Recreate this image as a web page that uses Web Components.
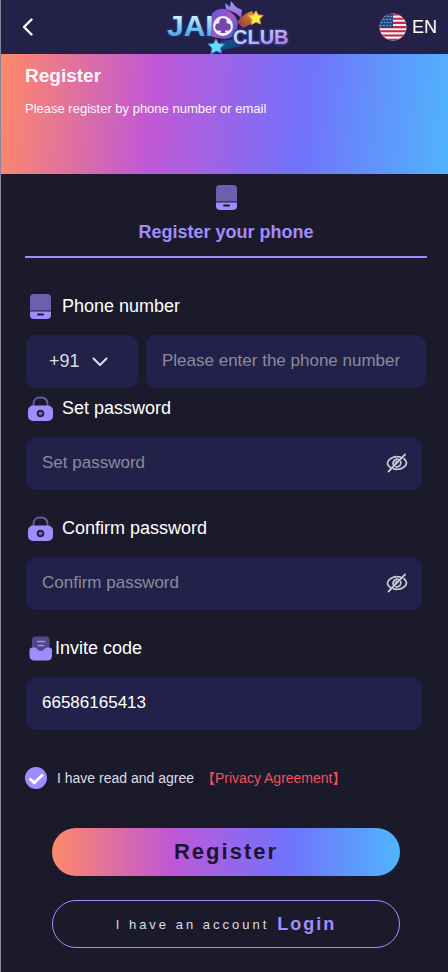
<!DOCTYPE html>
<html lang="en">
<head>
<meta charset="utf-8">
<meta name="viewport" content="width=device-width, initial-scale=1">
<title>Register</title>
<style>
  :root {
    --bg: #1b1a2b;
    --bar: #232148;
    --field: #222149;
    --accent: #a18cff;
    --rainbow: #ff8968 0%, #c058d6 34%, #7272fb 67%, #50b4fd 100%;
  }
  body {
    margin: 0;
    background: var(--bg);
    color: #fff;
    font-family: "Liberation Sans", Arial, sans-serif;
  }
</style>
</head>
<body>
<register-page></register-page>

<script>
const ICONS = {
  back: [12, 20, '<path d="M10.500 2.500 3 10l7.500 7.500" fill="none" stroke="#fff" stroke-width="2.400" stroke-linecap="round" stroke-linejoin="round"/>'],
  phone: [26, 28, '<path d="M3 17.500V5q0-4 4-4h13q4 0 4 4v12.500z" fill="#6e5fae"/><path d="M3 18.500h21V22q0 4-4 4H7q-4 0-4-4z" fill="#a18cff"/><rect x="10" y="20.500" width="7" height="2" rx="1" fill="#1b1a2b"/>'],
  lock: [26, 28, '<path d="M6.500 12V9q0-6.500 7-6.500t7 6.500v3" fill="none" stroke="#6a5ca6" stroke-width="1.800"/><rect x="1" y="10.500" width="25" height="15.500" rx="5" fill="#a18cff"/><circle cx="13.500" cy="18.500" r="3.800" fill="#29233f"/><circle cx="13.500" cy="18.500" r="1.800" fill="#7d6dc0"/>'],
  invite: [26, 28, '<path d="M5 16V5q0-3.500 3.500-3.500h10.500q3.500 0 3.500 3.500v11z" fill="#52478a"/><path d="M10.500 6.500h7M11.500 10.500h5" stroke="#a18cff" stroke-width="1.500" stroke-linecap="round"/><path d="M2.500 15q0-2.500 3-2.500h2q1.500 0 2.500 1.500 1.500 2 3.800 2t3.700-2q1-1.500 2.500-1.500h2q3 0 3 2.500v5.500q0 5-5 5H7.500q-5 0-5-5z" fill="#a18cff"/>'],
  down: [16, 10, '<path d="M1.500 1.500 8 8l6.500-6.500" fill="none" stroke="#dcdce6" stroke-width="2" stroke-linecap="round" stroke-linejoin="round"/>'],
  eye: [22, 20, '<g fill="none" stroke="#c6c6d2" stroke-width="1.800" stroke-linecap="round"><path d="M14.500 4.200A12 12 0 0 0 11 3.700C6 3.700 1.500 7 1.500 10c0 2 1.500 3.800 3.900 5M18 5.800c1.600 1.200 2.500 2.700 2.500 4.200 0 3-4.500 6.300-9.500 6.300-1.200 0-2.300-.2-3.300-.5"/><path d="M13 6.800A4 4 0 0 0 7.500 12M14.800 9A4 4 0 0 1 10 13.800M11.500 8.800a1.500 1.500 0 0 0-1.800 1.800"/><path d="M19 1.500 2.500 18.500"/></g>'],
  tick: [22, 22, '<path d="m4.500 11.500 4.700 4.300L18 7.500" fill="none" stroke="#fff" stroke-width="2.800"/>'],
  flag: [28, 28, '<defs><clipPath id="c"><circle cx="14" cy="14" r="13.500"/></clipPath></defs><g clip-path="url(#c)"><path fill="#f4eef2" d="M0 0h28v28H0z"/><path stroke="#c12b48" stroke-width="2.100" d="M0 1.500h28M0 5.700h28M0 9.900h28M0 14.100h28M0 18.300h28M0 22.500h28M0 26.700h28"/><path fill="#264a80" d="M0 0h14v15H0z"/><path stroke="#a9c0dd" stroke-width="1.200" stroke-dasharray="1.200 2" d="M2 3.500h12M1 6.500h13M2 9.500h12M1 12.500h13"/></g>']
};

class UiIcon extends HTMLElement {
  connectedCallback() {
    const [w, h, art] = ICONS[this.getAttribute('name')];
    this.attachShadow({ mode: 'open' }).innerHTML = `
      <style>:host{display:inline-flex;flex:none}svg{display:block;overflow:visible}</style>
      <svg width="${w}" height="${h}" viewBox="0 0 ${w} ${h}" aria-hidden="true">${art}</svg>`;
  }
}

class ClubLogo extends HTMLElement {
  constructor() {
    super();
    this.attachShadow({ mode: 'open' }).innerHTML = `
      <style>
        :host { display: block; }
        svg { display: block; overflow: visible; }
        text { font-family: "Liberation Sans", Arial, sans-serif; font-weight: bold; paint-order: stroke; stroke-linejoin: round; }
      </style>
      <svg width="124" height="54" viewBox="0 0 124 54" role="img" aria-label="JAI CLUB">
        <defs>
          <linearGradient id="a" x1="0" y1="0" x2="0" y2="1"><stop offset=".1" stop-color="#f2fbff"/><stop offset=".5" stop-color="#86d2f4"/><stop offset="1" stop-color="#3784dc"/></linearGradient>
          <linearGradient id="b" x1="0" y1="0" x2="1" y2="1"><stop stop-color="#b9f3ff"/><stop offset=".45" stop-color="#c4c4fa"/><stop offset="1" stop-color="#b264dc"/></linearGradient>
          <linearGradient id="r" x1="0" y1="0" x2="1" y2="1"><stop stop-color="#6a55cf"/><stop offset=".5" stop-color="#a657cf"/><stop offset="1" stop-color="#3e5fc8"/></linearGradient>
          <linearGradient id="o" x1="0" y1="1" x2="1" y2="0"><stop stop-color="#7b3049"/><stop offset="1" stop-color="#ff9b2c"/></linearGradient>
          <linearGradient id="k" x1="0" y1="0" x2="0" y2="1"><stop stop-color="#8fa4f0"/><stop offset="1" stop-color="#b25bd8"/></linearGradient>
        </defs>
        <path d="m59 9-1-6 5 4 1-6 5 6 6 3-1 8-4-4-6-3z" fill="url(#k)"/>
        <path d="M70 22q6-8 15-11l5 10-14 7z" fill="url(#o)"/>
        <path d="m54 41 14-2 8 7-22 4z" fill="#164a86"/>
        <text x="0" y="36" font-size="30" fill="url(#a)" stroke="#1b2d62" stroke-width="3">JAI</text>
        <path d="M45 13q10-8 19-1 9 7 6 17-2 9-12 10l-13-2z" fill="url(#r)"/>
        <circle cx="56" cy="26" r="10" fill="#f1f2ff"/>
        <g fill="#7448ac"><circle cx="56" cy="22" r="3.800"/><circle cx="52" cy="27" r="3.800"/><circle cx="60" cy="27" r="3.800"/><path d="M55 25h2l1.500 8h-5z"/></g>
        <text x="66" y="44" font-size="20" fill="url(#b)" stroke="#2c3480" stroke-width="3">CLUB</text>
        <path d="m89 11 2 4 5 .500-3.500 3.500 1 5-4.500-2-4.500 2.500.500-5-3.500-4 5-.500z" fill="#ffec48" stroke="#f8a631"/>
        <path d="m49 39 2.500 4.500 6 .500-4 4 1 5-5-2-5.500 3 1-6-4-4 5.500-.500z" fill="#70d8ff" stroke="#278bd0"/>
      </svg>`;
  }
}

class TopBar extends HTMLElement {
  constructor() {
    super();
    this.attachShadow({ mode: 'open' }).innerHTML = `
      <style>
        :host { display: grid; grid-template-columns: 1fr auto 1fr; align-items: center; height: 54px; padding: 0 11px 0 20px; background: var(--bar); }
        button { display: inline-flex; align-items: center; gap: 5px; padding: 0; border: 0; background: none; color: #fff; font: 18px "Liberation Sans", Arial, sans-serif; }
        .lang { justify-self: end; }
      </style>
      <button type="button" aria-label="Back"><ui-icon name="back"></ui-icon></button>
      <club-logo></club-logo>
      <button class="lang" type="button"><ui-icon name="flag"></ui-icon>EN</button>`;
  }
}

class HeroBanner extends HTMLElement {
  constructor() {
    super();
    this.attachShadow({ mode: 'open' }).innerHTML = `
      <style>
        :host { display: block; box-sizing: border-box; height: 120px; padding: 10px 24px; background: linear-gradient(95deg, var(--rainbow)); color: #fff6fb; }
        h1 { margin: 0 0 13px; font-size: 19px; line-height: 24px; }
        p { margin: 0; font-size: 13px; line-height: 16px; }
      </style>
      <h1><slot name="title"></slot></h1>
      <p><slot></slot></p>`;
  }
}

class PhoneTab extends HTMLElement {
  constructor() {
    super();
    this.attachShadow({ mode: 'open' }).innerHTML = `
      <style>
        :host { display: block; }
        button { display: flex; flex-direction: column; align-items: center; gap: 10px; width: 100%; height: 84px; padding: 10px 0 0; border: 0; border-bottom: 2px solid var(--accent); background: none; color: var(--accent); font: bold 18px/20px "Liberation Sans", Arial, sans-serif; }
      </style>
      <button type="button"><ui-icon name="phone"></ui-icon><slot></slot></button>`;
  }
}

class FormField extends HTMLElement {
  connectedCallback() {
    const get = n => this.getAttribute(n) || '';
    const secret = get('type') === 'password';
    const code = get('code');
    this.attachShadow({ mode: 'open' }).innerHTML = `
      <style>
        :host { display: block; margin: 0 5px 18px 1px; }
        :host([code]) { margin: 0 1px 0 1px; }
        :host([last]) { margin-bottom: 0; }
        label { display: flex; align-items: center; gap: 9px; height: 40px; margin-bottom: 9px; padding-left: 1px; font-size: 18px; }
        label ui-icon { padding-top: 2px; }
        :host([last]) label { gap: 2px; }
        .row { display: flex; gap: 8px; }
        .box { display: flex; align-items: center; box-sizing: border-box; height: 53px; padding: 0 14px 0 16px; border-radius: 10px; background: var(--field); }
        .main { flex: 1; min-width: 0; }
        .code { width: 112px; flex: none; padding: 0 30px 0 23px; justify-content: space-between; }
        input, select { padding: 0 0 2px; border: 0; outline: 0; background: none; color: #fff; font: 17px/20px "Liberation Sans", Arial, sans-serif; }
        input { flex: 1; min-width: 0; width: 100%; height: 100%; box-sizing: border-box; }
        input::placeholder { color: #8b8a9d; opacity: 1; }
        select { appearance: none; font-size: 18px; color: #dcdce6; }
        button { padding: 0 0 2px; border: 0; background: none; display: flex; }
      </style>
      <label for="f"><ui-icon name="${get('icon')}"></ui-icon>${get('label')}</label>
      <div class="row">
        ${code ? `<div class="box code"><select aria-label="Country code"><option>${code}</option></select><ui-icon name="down"></ui-icon></div>` : ''}
        <div class="box main">
          <input id="f" type="${get('type') || 'text'}" placeholder="${get('placeholder')}" value="${get('value')}">
          ${secret ? '<button type="button" aria-label="Show password"><ui-icon name="eye"></ui-icon></button>' : ''}
        </div>
      </div>`;
  }
}

class AgreeCheck extends HTMLElement {
  constructor() {
    super();
    this.attachShadow({ mode: 'open' }).innerHTML = `
      <style>
        :host { display: flex; align-items: center; height: 22px; font-size: 14px; color: #dedee8; }
        .tick { display: grid; margin-right: 10px; }
        .tick > * { grid-area: 1 / 1; }
        input { appearance: none; width: 22px; height: 22px; margin: 0; border-radius: 50%; background: #3b3860; }
        input:checked { background: var(--accent); }
        input:not(:checked) + ui-icon { visibility: hidden; }
        ui-icon { pointer-events: none; }
        a { color: #f0525e; text-decoration: none; font-family: "Liberation Sans", "Noto Sans CJK SC", sans-serif; line-height: 22px; margin-left: 7px; }
      </style>
      <span class="tick"><input id="ok" type="checkbox" checked><ui-icon name="tick"></ui-icon></span>
      <label for="ok">I have read and agree</label>
      <a href="#privacy">【Privacy Agreement】</a>`;
  }
}

class PillButton extends HTMLElement {
  constructor() {
    super();
    this.attachShadow({ mode: 'open' }).innerHTML = `
      <style>
        :host { display: block; margin: 0 27px; }
        button { display: flex; align-items: center; justify-content: center; gap: 8px; box-sizing: border-box; width: 100%; height: 48px; padding: 0; border: 0; border-radius: 24px; background: linear-gradient(90deg, var(--rainbow)); color: #1d1433; font: bold 22px "Liberation Sans", Arial, sans-serif; letter-spacing: 2px; }
        :host([outline]) button { border: 1px solid var(--accent); background: none; color: #dedee8; font-size: 13px; font-weight: normal; letter-spacing: 3px; }
        ::slotted(strong) { color: var(--accent); font-size: 18px; letter-spacing: 2px; }
      </style>
      <button type="button"><slot></slot></button>`;
  }
}

class RegisterPage extends HTMLElement {
  constructor() {
    super();
    this.attachShadow({ mode: 'open' }).innerHTML = `
      <style>
        :host { display: block; border-left: 1px solid #85859c; }
        main { padding: 0 21px 24px 24px; }
        form { padding-top: 28px; }
        agree-check { margin: 37px 0 39px; }
        pill-button + pill-button { margin-top: 24px; }
      </style>
      <top-bar></top-bar>
      <hero-banner><span slot="title">Register</span>Please register by phone number or email</hero-banner>
      <main>
        <phone-tab>Register your phone</phone-tab>
        <form>
          <form-field icon="phone" label="Phone number" type="tel" code="+91" placeholder="Please enter the phone number"></form-field>
          <form-field icon="lock" label="Set password" type="password" placeholder="Set password"></form-field>
          <form-field icon="lock" label="Confirm password" type="password" placeholder="Confirm password"></form-field>
          <form-field icon="invite" label="Invite code" value="66586165413" last></form-field>
          <agree-check></agree-check>
          <pill-button>Register</pill-button>
          <pill-button outline><span>I have an account</span><strong>Login</strong></pill-button>
        </form>
      </main>`;
  }
}

customElements.define('ui-icon', UiIcon);
customElements.define('club-logo', ClubLogo);
customElements.define('top-bar', TopBar);
customElements.define('hero-banner', HeroBanner);
customElements.define('phone-tab', PhoneTab);
customElements.define('form-field', FormField);
customElements.define('agree-check', AgreeCheck);
customElements.define('pill-button', PillButton);
customElements.define('register-page', RegisterPage);
</script>
</body>
</html>
